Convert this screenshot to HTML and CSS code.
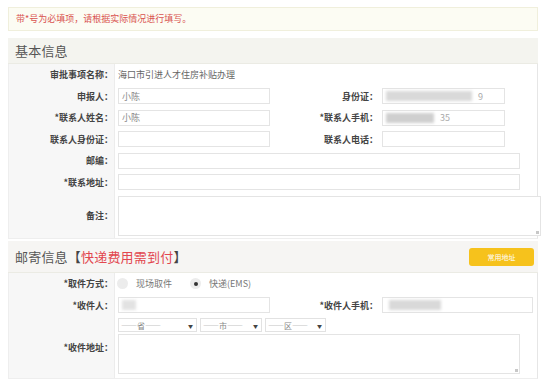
FILE: index.html
```html
<!DOCTYPE html>
<html lang="zh-CN">
<head>
<meta charset="utf-8">
<title>住房补贴办理</title>
<link rel="stylesheet" href="styles.css">
</head>
<body>
<div class="page">
  <div class="notice">带*号为必填项，请根据实际情况进行填写。</div>

  <div class="sec-head"><h2 class="sec-title">基本信息</h2></div>
  <div class="form">
    <div class="row">
      <div class="lbl">审批事项名称：</div>
      <div class="cell val">海口市引进人才住房补贴办理</div>
    </div>
    <div class="row two">
      <div class="lbl">申报人：</div>
      <div class="cell"><div class="inp w152">小陈</div></div>
      <div class="lbl2">身份证：</div>
      <div class="cell"><div class="inp w123"><span class="mask m88"></span><span class="tail">9</span></div></div>
    </div>
    <div class="row two">
      <div class="lbl">*联系人姓名：</div>
      <div class="cell"><div class="inp w152">小陈</div></div>
      <div class="lbl2">*联系人手机：</div>
      <div class="cell"><div class="inp w123"><span class="mask m50"></span><span class="tail">35</span></div></div>
    </div>
    <div class="row two">
      <div class="lbl">联系人身份证：</div>
      <div class="cell"><div class="inp w152"></div></div>
      <div class="lbl2">联系人电话：</div>
      <div class="cell"><div class="inp w123"></div></div>
    </div>
    <div class="row">
      <div class="lbl">邮编：</div>
      <div class="cell"><div class="inp w402"></div></div>
    </div>
    <div class="row">
      <div class="lbl">*联系地址：</div>
      <div class="cell"><div class="inp w402"></div></div>
    </div>
    <div class="row tall">
      <div class="lbl">备注：</div>
      <div class="cell"><div class="area w423"><span class="grip"></span></div></div>
    </div>
  </div>

  <div class="sec-head sec2">
    <h2 class="sec-title">邮寄信息<span class="br">【</span><span class="red">快递费用需到付</span><span class="br">】</span></h2>
    <button class="btn" type="button">常用地址</button>
  </div>
  <div class="form">
    <div class="row">
      <div class="lbl">*取件方式：</div>
      <div class="cell radios">
        <span class="radio"></span><span class="opt">现场取件</span>
        <span class="radio on"></span><span class="opt">快递(EMS)</span>
      </div>
    </div>
    <div class="row two">
      <div class="lbl">*收件人：</div>
      <div class="cell"><div class="inp w152"><span class="mask m18"></span></div></div>
      <div class="lbl2">*收件人手机：</div>
      <div class="cell"><div class="inp w151"><span class="mask m52 gap"></span></div></div>
    </div>
    <div class="row addr">
      <div class="lbl">*收件地址：</div>
      <div class="cell stack">
        <div class="selects">
          <div class="sel s79">——省——<span class="arr">▼</span></div>
          <div class="sel s62">——市——<span class="arr">▼</span></div>
          <div class="sel s61">——区——<span class="arr">▼</span></div>
        </div>
        <div class="area w402 h40"><span class="grip"></span></div>
      </div>
    </div>
  </div>
</div>
</body>
</html>
```

FILE: styles.css
```css
* { box-sizing: border-box; }
html, body { margin: 0; padding: 0; background: #fff; }
body {
  font-family: "Noto Sans CJK SC", "Noto Sans", sans-serif;
  font-size: 9px;
  color: #333;
}
.page {
  width: 530px;
  margin: 7px 0 0 8px;
}
.notice {
  height: 24px;
  line-height: 22px;
  padding-left: 7px;
  background: #fcfcf3;
  border: 1px solid #f0efdc;
  color: #d9534f;
  font-size: 9px;
}
.sec-head {
  margin-top: 7px;
  height: 26px;
  background: #f4f4ef;
  border-bottom: 1px solid #ebebe4;
  display: flex;
  align-items: center;
  justify-content: space-between;
  padding: 0 4px 0 7px;
}
.sec2 {
  margin-top: 2px;
  height: 32px;
  background: #f6f5f3;
}
.sec-title {
  margin: 0;
  font-size: 13px;
  font-weight: normal;
  color: #555;
  letter-spacing: 0.2px;
}
.sec-title .red { color: #e2474f; }
.sec-title .br { color: #444; }
.btn {
  width: 65px;
  height: 18px;
  border: none;
  border-radius: 3px;
  background: #f6c21c;
  color: #fff;
  font-family: inherit;
  font-size: 7px;
  padding: 0;
}
.form {
  border-left: 1px solid #eee;
  border-right: 1px solid #e6e6e6;
  border-bottom: 1px solid #eee;
}
.row {
  display: grid;
  grid-template-columns: 106px 1fr;
  height: 21.5px;
  align-items: stretch;
}
.row.two { grid-template-columns: 106px 163px 100px 1fr; }
.row.tall { height: 45px; }
.row.addr { height: 62px; }
.lbl, .lbl2 {
  display: flex;
  align-items: center;
  justify-content: flex-end;
  font-weight: bold;
  color: #444;
  white-space: nowrap;
}
.lbl {
  background: #f7f7f7;
  border-right: 1px solid #ececec;
  padding-right: 1px;
}
.lbl2 { padding-right: 0; }
.cell {
  display: flex;
  align-items: center;
  padding-left: 3px;
}
.lbl2 + .cell { padding-left: 4px; }
.val { color: #666; padding-left: 3px; }
.inp {
  height: 16px;
  border: 1px solid #e4e4e4;
  background: #fff;
  color: #8a8a8a;
  padding-left: 3px;
  display: flex;
  align-items: center;
}
.w152 { width: 152px; }
.w151 { width: 151px; }
.w123 { width: 123px; }
.w402 { width: 402px; }
.w423 { width: 423px; }
.mask {
  display: inline-block;
  height: 10px;
  background: #d9d9d9;
  filter: blur(1.5px);
}
.m88 { width: 86px; }
.m50 { width: 48px; background: #cfcfcf; }
.m18 { width: 14px; background: #e2e2e2; }
.m52 { width: 52px; }
.gap { margin-left: 3px; }
.tail { color: #aaa; margin-left: 6px; }
.area {
  position: relative;
  height: 40px;
  border: 1px solid #e4e4e4;
  background: #fff;
}
.h40 { height: 40px; }
.grip {
  position: absolute;
  right: 1px;
  bottom: 1px;
  width: 3px;
  height: 3px;
  background: #c8c8c8;
}
.radios { padding-left: 2px; }
.radio {
  width: 11px;
  height: 11px;
  border-radius: 50%;
  background: #ececec;
  display: inline-flex;
  align-items: center;
  justify-content: center;
  margin-right: 8px;
}
.radio.on::after {
  content: "";
  width: 4px;
  height: 4px;
  border-radius: 50%;
  background: #333;
}
.opt { color: #777; margin-right: 18px; }
.stack {
  flex-direction: column;
  align-items: flex-start;
  justify-content: flex-start;
  padding-top: 2px;
  gap: 2px;
}
.selects { display: flex; gap: 3px; }
.sel {
  height: 14px;
  border: 1px solid #e2e2e2;
  display: flex;
  align-items: center;
  justify-content: space-between;
  padding: 0 3px 0 2px;
  color: #888;
  font-size: 8px;
}
.s79 { width: 79px; }
.s62 { width: 62px; }
.s61 { width: 61px; }
.arr { font-size: 5px; color: #444; }
```
